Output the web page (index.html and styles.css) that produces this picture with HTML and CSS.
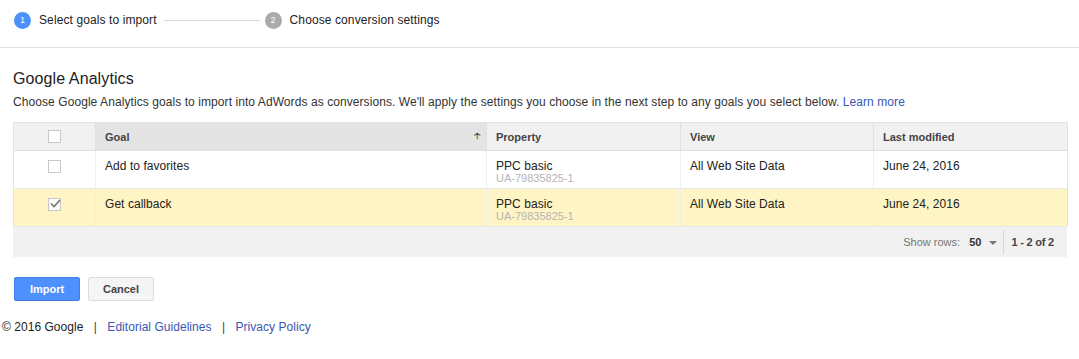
FILE: index.html
```html
<!DOCTYPE html>
<html>
<head>
<meta charset="utf-8">
<title>Import goals</title>
<link rel="stylesheet" href="styles.css">
</head>
<body>
<div class="steps">
	<div class="step active"><span class="num">1</span>Select goals to import</div>
	<div class="step_line"></div>
	<div class="step"><span class="num">2</span>Choose conversion settings</div>
</div>

<div class="main">
	<h1 class="title">Google Analytics</h1>
	<p class="desc">Choose Google Analytics goals to import into AdWords as conversions. We'll apply the settings you choose in the next step to any goals you select below. <a href="javascript:;">Learn more</a></p>

	<table class="goals">
		<thead>
			<tr>
				<th class="c_check"><span class="box"></span></th>
				<th class="c_goal sorted"><div class="th_inner">Goal<span class="sort">&#129121;</span></div></th>
				<th class="c_prop">Property</th>
				<th class="c_view">View</th>
				<th class="c_date">Last modified</th>
			</tr>
		</thead>
		<tbody>
			<tr>
				<td class="c_check"><span class="box"></span></td>
				<td>Add to favorites</td>
				<td>PPC basic<div class="sub">UA-79835825-1</div></td>
				<td>All Web Site Data</td>
				<td>June 24, 2016</td>
			</tr>
			<tr class="selected">
				<td class="c_check"><span class="box checked"><svg width="11" height="9" viewBox="0 0 11 9"><path d="M1 4.5 L4 7.5 L10 1" fill="none" stroke="#777" stroke-width="1.6"/></svg></span></td>
				<td>Get callback</td>
				<td>PPC basic<div class="sub">UA-79835825-1</div></td>
				<td>All Web Site Data</td>
				<td>June 24, 2016</td>
			</tr>
		</tbody>
	</table>
	<div class="pager">
		<span class="rows_label">Show rows:</span>
		<span class="rows_val">50</span>
		<span class="caret"></span>
		<span class="range">1 - 2 of 2</span>
	</div>

	<div class="buttons">
		<a class="btn btn_blue" href="javascript:;">Import</a>
		<a class="btn" href="javascript:;">Cancel</a>
	</div>
</div>

<div class="footer">&copy; 2016 Google <span class="sep">|</span> <a href="javascript:;">Editorial Guidelines</a> <span class="sep">|</span> <a href="javascript:;">Privacy Policy</a></div>
</body>
</html>
```

FILE: styles.css
```css
* { padding: 0; margin: 0; box-sizing: border-box; }
body { font: 12px "Liberation Sans", Arial, sans-serif; color: #222; background: #fff; }
a { color: #3a56b4; text-decoration: none; }

.steps { height: 48px; border-bottom: 1px solid #e3e3e3; display: flex; align-items: center; padding: 0 0 7px 14px; }
.step { display: flex; align-items: center; font-size: 12px; color: #222; letter-spacing: 0.1px; }
.step .num { width: 17px; height: 17px; border-radius: 50%; background: #aaa; color: #fff; font-size: 9px; display: flex; align-items: center; justify-content: center; margin-right: 8px; letter-spacing: 0; }
.step.active .num { background: #4d90fe; }
.step_line { width: 96px; height: 1px; background: #d6d6d6; margin: 0 5px 0 7px; }

.main { padding: 0 12px 0 13px; }
.title { font-size: 16px; font-weight: normal; color: #222; margin-top: 21px; line-height: 19px; letter-spacing: 0.1px; }
.desc { font-size: 12px; color: #333; margin-top: 7px; line-height: 14px; letter-spacing: 0.075px; }

.goals { width: 1054px; border-collapse: collapse; margin-top: 13px; border: 1px solid #e3e3e3; table-layout: fixed; }
.goals th { background: #f1f1f1; height: 28px; font-size: 11px; font-weight: bold; color: #444; text-align: left; padding: 0 9px; border-left: 1px solid #e0e0e0; border-bottom: 1px solid #e0e0e0; }
.goals th.sorted { background: #e4e4e4; }
.th_inner { display: flex; justify-content: space-between; align-items: center; }
.goals th .sort { font-size: 9px; color: #555; margin-right: -3px; }
.goals td { height: 38px; vertical-align: top; padding: 8px 9px 0; border-left: 1px solid #eeeeee; border-bottom: 1px solid #e8e8e8; line-height: 14px; letter-spacing: 0.05px; }
.goals .c_check { width: 82px; text-align: center; border-left: 0; padding: 0; }
.goals td.c_check { padding-top: 8px; }
.goals .c_goal { width: 391px; }
.goals .c_prop { width: 194px; }
.goals .c_view { width: 193px; }
.goals .c_date { width: 194px; }
.goals tr.selected td { background: #fff4c4; }
.goals .sub { font-size: 11px; color: #b5b5b5; line-height: 11px; margin-top: 0; letter-spacing: 0; }

.box { display: inline-block; width: 13px; height: 13px; border: 1px solid #c9c9c9; background: #fff; vertical-align: middle; position: relative; }
.box.checked { background: #fafafa; }
.box svg { position: absolute; left: 1px; top: 0; }

.pager { width: 1054px; height: 30px; background: #f1f1f1; display: flex; align-items: center; justify-content: flex-end; color: #777; font-size: 11px; padding-right: 13px; }
.rows_val { color: #333; font-weight: bold; margin-left: 9px; }
.caret { width: 0; height: 0; border-left: 4px solid transparent; border-right: 4px solid transparent; border-top: 4px solid #777; margin: 1px 0 0 8px; }
.range { color: #444; font-weight: bold; border-left: 1px solid #d6d6d6; height: 24px; line-height: 24px; margin-left: 6px; padding-left: 7px; letter-spacing: -0.2px; }

.buttons { display: flex; gap: 8px; margin-top: 20px; padding-left: 1px; }
.btn { width: 66px; height: 24px; line-height: 22px; text-align: center; font-size: 11px; font-weight: bold; color: #444; background: #f5f5f5; border: 1px solid #dcdcdc; border-radius: 2px; }
.btn_blue { background: #4d90fe; border-color: #3f7de8; color: #fff; }

.footer { font-size: 12px; color: #222; padding-left: 2px; margin-top: 19px; letter-spacing: 0.04px; }
.footer .sep { margin: 0 7px; color: #444; }
```
